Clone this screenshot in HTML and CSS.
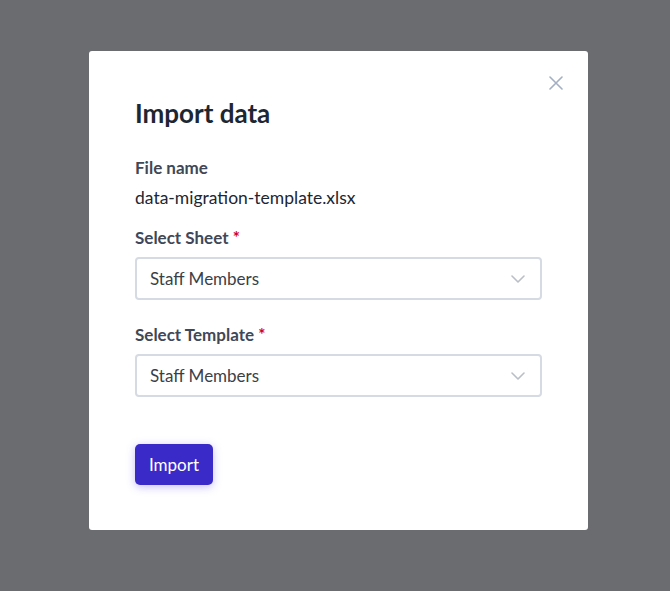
FILE: index.html
```html
<!DOCTYPE html>
<html lang="en">
<head>
  <meta charset="UTF-8">
  <meta name="viewport" content="width=device-width, initial-scale=1.0">
  <title>Import data</title>
  <link rel="stylesheet" href="styles.css">
</head>
<body>

  <div class="overlay">
    <div class="modal">
      <button class="close" aria-label="Close">
        <svg width="14" height="14" viewBox="0 0 14 14">
          <path d="M1 1 L13 13 M13 1 L1 13" stroke="#a3afc2" stroke-width="1.6" stroke-linecap="round" fill="none"/>
        </svg>
      </button>

      <h1>Import data</h1>

      <div class="field file">
        <div class="label">File name</div>
        <div class="filename">data-migration-template.xlsx</div>
      </div>

      <div class="field">
        <div class="label">Select Sheet <span class="req">*</span></div>
        <div class="select">
          <span>Staff Members</span>
          <svg width="14" height="8" viewBox="0 0 14 8">
            <path d="M1 1 L7 7 L13 1" stroke="#b9bec7" stroke-width="1.6" fill="none" stroke-linecap="round" stroke-linejoin="round"/>
          </svg>
        </div>
      </div>

      <div class="field">
        <div class="label">Select Template <span class="req">*</span></div>
        <div class="select">
          <span>Staff Members</span>
          <svg width="14" height="8" viewBox="0 0 14 8">
            <path d="M1 1 L7 7 L13 1" stroke="#b9bec7" stroke-width="1.6" fill="none" stroke-linecap="round" stroke-linejoin="round"/>
          </svg>
        </div>
      </div>

      <button class="btn">Import</button>
    </div>
  </div>

</body>
</html>
```

FILE: styles.css
```css
body {
  margin: 0;
  padding: 0;
  font-family: Lato, "Open Sans", sans-serif;
  background-color: #6b6c70;
}

.overlay {
  height: 591px;
  padding-top: 51px;
  box-sizing: border-box;
}

.modal {
  position: relative;
  width: 499px;
  height: 479px;
  margin-left: 89px;
  box-sizing: border-box;
  padding: 46px 46px 0 46px;
  background-color: #fff;
  border-radius: 3px;
}

.close {
  position: absolute;
  top: 25px;
  right: 25px;
  border: 0;
  background: none;
  padding: 0;
  cursor: pointer;
}

h1 {
  margin: 0 0 28px 0;
  font-size: 26px;
  font-weight: 700;
  color: #1d2633;
  line-height: 32px;
}

.field {
  margin-bottom: 24px;
}

.field.file {
  margin-bottom: 18px;
}

.label {
  font-size: 17px;
  font-weight: 700;
  color: #3f4857;
  line-height: 22px;
}

.req {
  color: #d0021b;
}

.filename {
  margin-top: 8px;
  font-size: 17.5px;
  color: #1d2633;
  line-height: 22px;
}

.select {
  margin-top: 8px;
  height: 43px;
  box-sizing: border-box;
  border: 2px solid #d5dae3;
  border-radius: 4px;
  display: flex;
  align-items: center;
  justify-content: space-between;
  padding: 0 15px 0 13px;
  font-size: 17px;
  color: #3a3f48;
}

.btn {
  margin-top: 23px;
  width: 78px;
  height: 41px;
  border: 0;
  border-radius: 5px;
  background-color: #3a2bc8;
  color: #fff;
  font-family: Lato, sans-serif;
  font-size: 17px;
  box-shadow: 0 2px 8px rgba(90, 70, 230, 0.35);
  cursor: pointer;
}
```
